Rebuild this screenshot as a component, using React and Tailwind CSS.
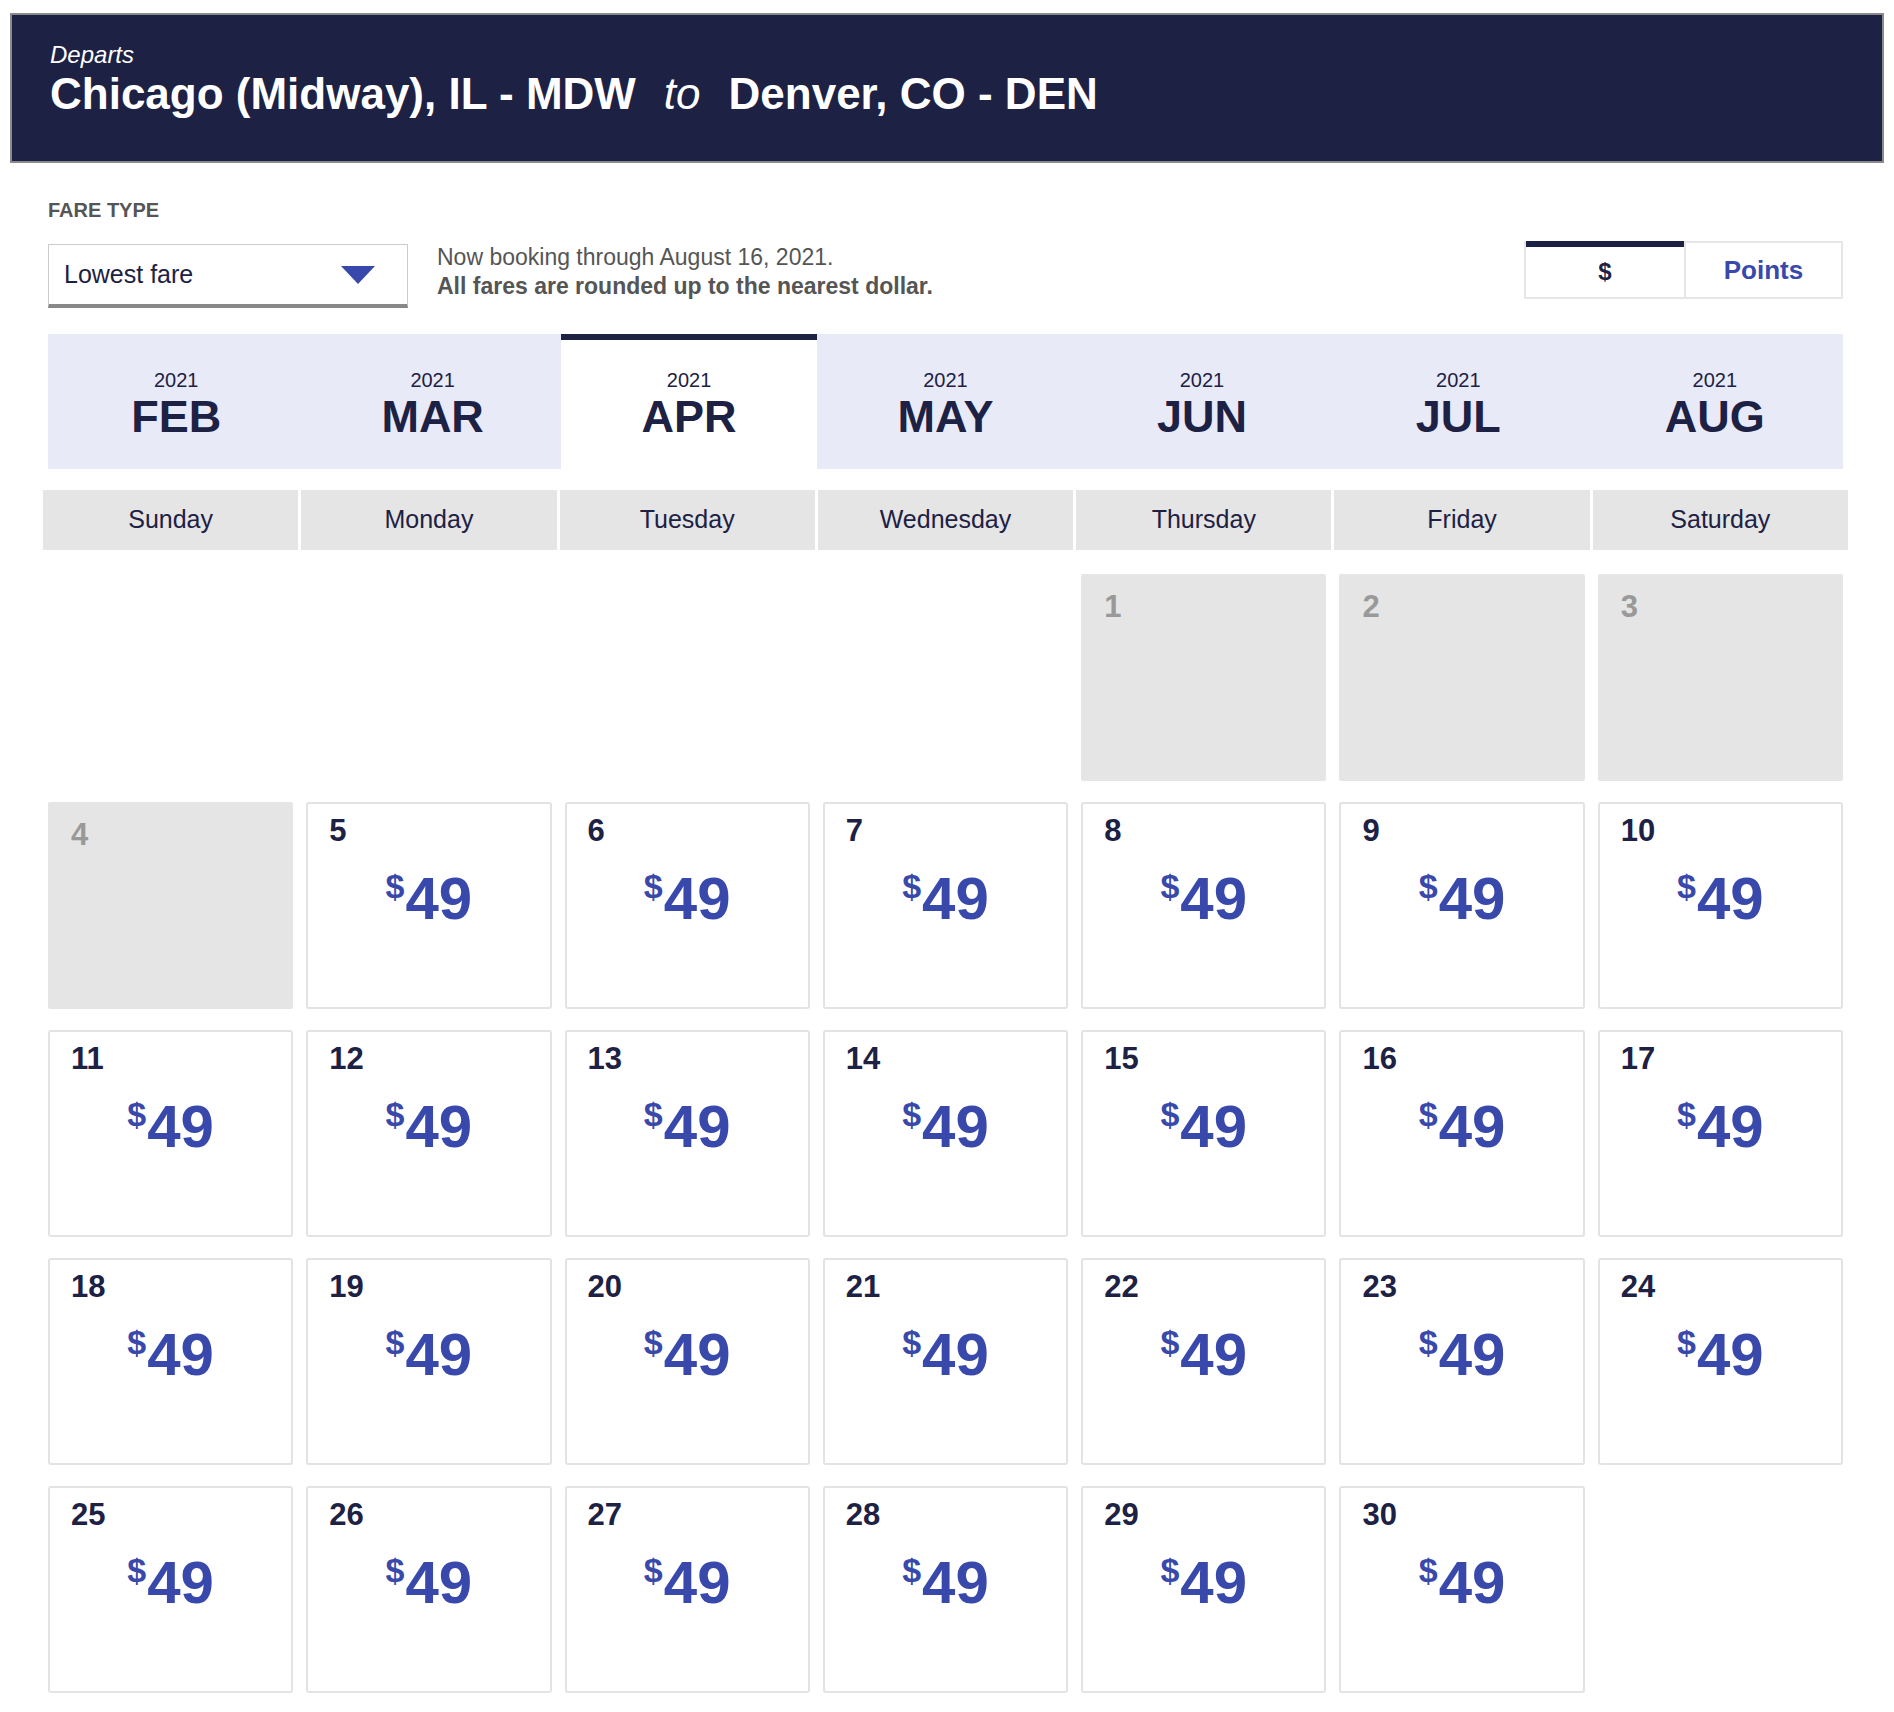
export default function App() {
  const months = [
    ["FEB", false], ["MAR", false], ["APR", true], ["MAY", false], ["JUN", false], ["JUL", false], ["AUG", false],
  ];
  const days = ["Sunday", "Monday", "Tuesday", "Wednesday", "Thursday", "Friday", "Saturday"];
  const cells = [];
  for (let i = 0; i < 4; i++) cells.push({ type: "empty" });
  for (let d = 1; d <= 30; d++) cells.push({ type: d <= 4 ? "off" : "fare", d });
  return (
    <div className="w-[1894px] min-h-[1712px] bg-white text-[#1d2144]" style={{ fontFamily: '"Liberation Sans", Arial, sans-serif' }}>
      <div className="pt-[13px] px-[10px]">
        <div className="h-[150px] bg-[#1d2144] border-2 border-[#8a8a8a] pl-[38px] pt-[26px] text-white">
          <div className="italic text-[24px] leading-[28px]">Departs</div>
          <div className="font-bold text-[44px] leading-[50px] flex items-baseline whitespace-pre">
            <span>Chicago (Midway), IL - MDW</span>
            <span className="font-normal italic mx-[28px]">to</span>
            <span>Denver, CO - DEN</span>
          </div>
        </div>
      </div>
      <div className="px-[48px] pr-[51px]">
        <div className="mt-[32px] text-[20px] font-bold text-[#555]">FARE TYPE</div>
        <div className="flex items-start mt-[19px]">
          <div className="w-[360px] h-[64px] border border-[#ccc] border-b-[4px] border-b-[#888] flex items-center justify-between pl-[15px] pr-[32px] text-[25px] text-[#1d2144]">
            <span>Lowest fare</span>
            <svg width="34" height="18" viewBox="0 0 34 18"><path d="M0 0 H34 L17 18 Z" fill="#3949ab" /></svg>
          </div>
          <div className="ml-[29px] -mt-[1px] text-[23px] leading-[29px] text-[#555]">
            <div>Now booking through August 16, 2021.</div>
            <div className="font-bold">All fares are rounded up to the nearest dollar.</div>
          </div>
          <div className="ml-auto -mt-[3px] flex border-2 border-[#e6e6e6] h-[58px]">
            <div className="w-[158px] border-t-[6px] border-t-[#1d2144] -mt-[2px] flex items-center justify-center font-bold text-[24px]">$</div>
            <div className="w-[157px] border-l-2 border-[#e6e6e6] flex items-center justify-center font-bold text-[26px] text-[#3949ab]">Points</div>
          </div>
        </div>
        <div className="mt-[26px] grid grid-cols-7 bg-[#e8eaf7] h-[135px]">
          {months.map(([m, a]) => (
            <div key={m} className={"flex flex-col items-center pt-[28px] border-t-[6px] " + (a ? "bg-white border-[#1d2144]" : "border-transparent")}>
              <div className="text-[20px] leading-[24px]">2021</div>
              <div className="text-[45px] font-bold leading-[50px]">{m}</div>
            </div>
          ))}
        </div>
        <div className="mt-[21px] -mx-[5px] grid grid-cols-7 gap-[3px]">
          {days.map((d) => (
            <div key={d} className="h-[60px] bg-[#e5e5e5] flex items-center justify-center text-[25px]">{d}</div>
          ))}
        </div>
        <div className="mt-[24px] grid grid-cols-7 gap-x-[13px] gap-y-[21px]">
          {cells.map((c, i) =>
            c.type === "empty" ? (
              <div key={i} className="h-[207px]" />
            ) : c.type === "off" ? (
              <div key={i} className="h-[207px] bg-[#e5e5e5] rounded-[2px] pl-[23px] pt-[10px] text-[31px] font-bold text-[#999]">{c.d}</div>
            ) : (
              <div key={i} className="h-[207px] border-2 border-[#e3e3e3] rounded-[3px] pl-[21px] pt-[9px]">
                <div className="text-[31px] font-bold leading-[36px]">{c.d}</div>
                <div className="flex justify-center items-start -ml-[21px] mt-[18px] text-[#3949ab] font-bold">
                  <span className="text-[34px] leading-[38px]">$</span>
                  <span className="text-[60px] leading-[64px] ml-[1px]">49</span>
                </div>
              </div>
            )
          )}
        </div>
      </div>
    </div>
  );
}
